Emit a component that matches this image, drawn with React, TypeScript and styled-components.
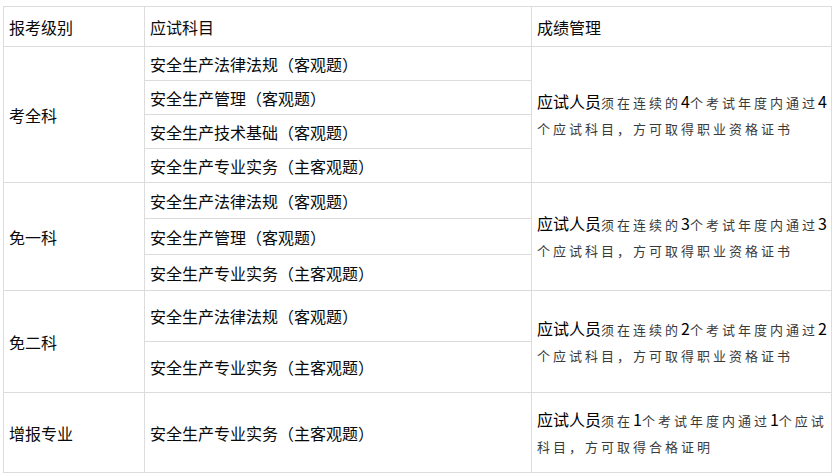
import React from "react";
import styled, { createGlobalStyle } from "styled-components";

const GlobalStyle = createGlobalStyle`
  html, body {
    margin: 0;
    padding: 0;
    background: #ffffff;
  }
  body {
    font-family: "Noto Sans CJK SC", "Noto Sans", "Liberation Sans", sans-serif;
    color: #000;
  }
`;

const Page = styled.div`
  padding: 6px 0 0 3px;
`;

const Table = styled.table`
  border-collapse: collapse;
  table-layout: fixed;
  width: 828px;
  font-size: 16px;
  color: #0a0a0a;
`;

const Col = styled.col<{ $w: number }>`
  width: ${(p) => p.$w}px;
`;

const Row = styled.tr<{ $h: number }>`
  height: ${(p) => p.$h}px;
`;

const Cell = styled.td`
  border: 1px solid #dcdcdc;
  padding: 0 5px;
  vertical-align: middle;
  line-height: 20px;
  white-space: nowrap;
`;

const HeadCell = styled(Cell).attrs({ as: "th" })`
  font-weight: normal;
  text-align: left;
`;

const NoteCell = styled(Cell)`
  padding: 0 0 0 5px;
  white-space: normal;
  line-height: 25px;
  word-break: break-all;
`;

const Lead = styled.span`
  color: #000;
  font-size: 16px;
`;

const Muted = styled.span`
  color: #3a3a3a;
  font-size: 13px;
  letter-spacing: 3px;
`;

const Num = styled.span`
  color: #000;
  font-size: 16px;
`;

type Group = {
  level: string;
  rowH: number;
  subjects: string[];
  note: React.ReactNode;
};

const note = (n: string) => (
  <>
    <Lead>应试人员</Lead>
    <Muted>须在连续的</Muted>
    <Num>{n}</Num>
    <Muted>个考试年度内通过</Muted>
    <Num>{n}</Num>
    <Muted>个应试科目，方可取得职业资格证书</Muted>
  </>
);

const groups: Group[] = [
  {
    level: "考全科",
    rowH: 34,
    subjects: [
      "安全生产法律法规（客观题）",
      "安全生产管理（客观题）",
      "安全生产技术基础（客观题）",
      "安全生产专业实务（主客观题）",
    ],
    note: note("4"),
  },
  {
    level: "免一科",
    rowH: 36,
    subjects: [
      "安全生产法律法规（客观题）",
      "安全生产管理（客观题）",
      "安全生产专业实务（主客观题）",
    ],
    note: note("3"),
  },
  {
    level: "免二科",
    rowH: 51,
    subjects: ["安全生产法律法规（客观题）", "安全生产专业实务（主客观题）"],
    note: note("2"),
  },
  {
    level: "增报专业",
    rowH: 80,
    subjects: ["安全生产专业实务（主客观题）"],
    note: (
      <>
        <Lead>应试人员</Lead>
        <Muted>须在</Muted>
        <Num>1</Num>
        <Muted>个考试年度内通过</Muted>
        <Num>1</Num>
        <Muted>个应试</Muted>
        <Muted>科目，方可取得合格证明</Muted>
      </>
    ),
  },
];

export default function App() {
  return (
    <Page>
      <GlobalStyle />
      <Table>
        <colgroup>
          <Col $w={141} />
          <Col $w={387} />
          <Col $w={300} />
        </colgroup>
        <thead>
          <Row $h={40}>
            <HeadCell>报考级别</HeadCell>
            <HeadCell>应试科目</HeadCell>
            <HeadCell>成绩管理</HeadCell>
          </Row>
        </thead>
        <tbody>
          {groups.map((g) =>
            g.subjects.map((s, i) => (
              <Row $h={g.rowH} key={g.level + i}>
                {i === 0 && <Cell rowSpan={g.subjects.length}>{g.level}</Cell>}
                <Cell>{s}</Cell>
                {i === 0 && (
                  <NoteCell rowSpan={g.subjects.length}>{g.note}</NoteCell>
                )}
              </Row>
            ))
          )}
        </tbody>
      </Table>
    </Page>
  );
}
